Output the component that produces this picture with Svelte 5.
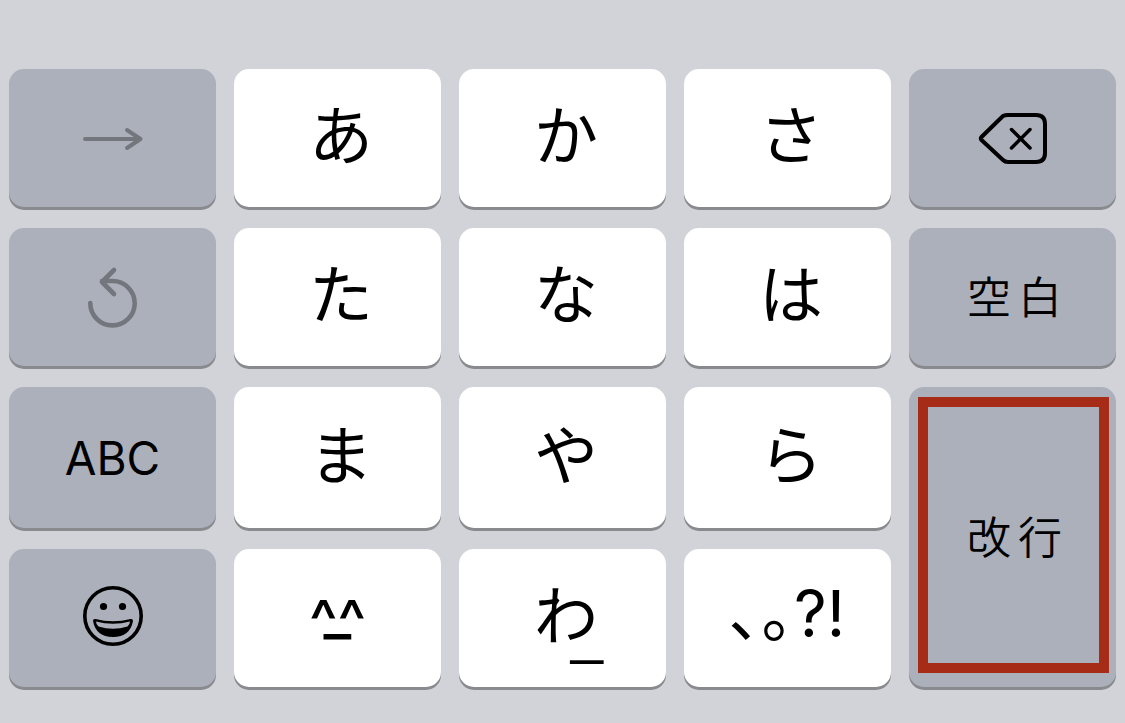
<!--
  Japanese 12-key flick keyboard
-->
<script lang="ts">
    interface Key {
        id: string;
        kind: "kana" | "caps" | "wide" | "punct" | "face" | "wa" | "icon";
        label: string;
        dark?: boolean;
        disabled?: boolean;
    }

    const keys: Key[] = [
        { id: "next", kind: "icon", label: "次候補", dark: true, disabled: true },
        { id: "a", kind: "kana", label: "あ" },
        { id: "ka", kind: "kana", label: "か" },
        { id: "sa", kind: "kana", label: "さ" },
        { id: "delete", kind: "icon", label: "削除", dark: true },

        { id: "undo", kind: "icon", label: "逆順", dark: true, disabled: true },
        { id: "ta", kind: "kana", label: "た" },
        { id: "na", kind: "kana", label: "な" },
        { id: "ha", kind: "kana", label: "は" },
        { id: "space", kind: "wide", label: "空白", dark: true },

        { id: "abc", kind: "caps", label: "ABC", dark: true },
        { id: "ma", kind: "kana", label: "ま" },
        { id: "ya", kind: "kana", label: "や" },
        { id: "ra", kind: "kana", label: "ら" },
        { id: "enter", kind: "wide", label: "改行", dark: true },

        { id: "emoji", kind: "icon", label: "絵文字", dark: true },
        { id: "face", kind: "face", label: "顔文字" },
        { id: "wa", kind: "wa", label: "わ" },
        { id: "punct", kind: "punct", label: "句読点" },
    ];
</script>

<main class="keyboard">
    {#each keys as key (key.id)}
        <button
            type="button"
            class="key key--{key.kind}"
            class:key--dark={key.dark}
            class:key--enter={key.id === "enter"}
            disabled={key.disabled}
            aria-label={key.label}
        >
            {#if key.id === "next"}
                <svg width="63" height="26" viewBox="0 0 63 26">
                    <path d="M4 14H59M46 5L59.500 14L46 23" stroke-width="4" />
                </svg>
            {:else if key.id === "undo"}
                <svg width="53" height="62" viewBox="0 0 53 62">
                    <path d="M4.300 37A22.200 22.200 0 1 0 26.500 15H16M28 4L16 16L28 28" stroke-width="4.600" />
                </svg>
            {:else if key.id === "delete"}
                <svg width="71" height="54" viewBox="0 0 71 54">
                    <path d="M26 5Q28 4 31 4H59Q68 4 68 13V42Q68 51 59 51H31Q28 51 26 49L4.500 29Q3 27.500 4.500 26Z" stroke-width="4" />
                    <path d="M34.500 18.500L53 37M53 18.500L34.500 37" stroke-width="3.500" />
                </svg>
            {:else if key.id === "emoji"}
                <svg width="63" height="66" viewBox="0 0 63 66">
                    <circle cx="32" cy="31" r="28.2" stroke-width="3.6" />
                    <circle class="fill" cx="22.5" cy="21.5" r="3.6" />
                    <circle class="fill" cx="41.5" cy="21.5" r="3.6" />
                    <path class="fill" d="M12 36Q12 33.500 14.500 34Q32 38.500 49.500 34Q52 33.500 52 36Q49 52 32 52Q15 52 12 36ZM15 36.500Q15 39.500 17.500 41.500Q32 46 46.500 41.500Q49 39.500 49 36.500Q32 41 15 36.500Z" />
                </svg>
            {:else if key.kind === "wide"}
                {#each key.label as char}
                    <span>{char}</span>
                {/each}
            {:else if key.kind === "face"}
                <span class="eyes">^^</span>
                <span class="mouth">_</span>
            {:else if key.kind === "wa"}
                <span class="wa">わ<span class="bar">_</span></span>
            {:else if key.kind === "punct"}
                <span class="kuten">､｡</span><span>?!</span>
            {:else}
                <span>{key.label}</span>
            {/if}
        </button>
    {/each}
</main>

<style>
    :global(body) {
        margin: 0;
        background: #d2d3d9;
    }

    .keyboard {
        display: grid;
        grid-template-columns: repeat(5, minmax(0, 1fr));
        grid-template-rows: 138px 138px 141px 138px;
        gap: 21px 18px;
        padding: 69px 9px 36px;
    }

    .key {
        position: relative;
        display: flex;
        align-items: center;
        justify-content: center;
        min-width: 0;
        padding: 0;
        border: 0;
        border-radius: 15px;
        background: #fff;
        box-shadow: 0 3px 0 #898a8e;
        color: #000;
        font-family: Inter, "Noto Sans CJK JP", sans-serif;
        cursor: pointer;
    }

    .key--dark {
        background: #abb0bb;
    }

    .key:disabled {
        color: #73767d;
        cursor: default;
    }

    .key--kana,
    .key--wa {
        padding: 0 0 14px 7px;
        font-family: "Noto Sans CJK JP", sans-serif;
        font-size: 64px;
        line-height: 64px;
    }

    .key--caps {
        font-size: 46px;
    }

    .key--wide {
        gap: 7px;
        padding: 0 0 5px 4px;
        font-family: "Noto Sans CJK JP", sans-serif;
        font-size: 44px;
        font-weight: 350;
        line-height: 44px;
    }

    .key--punct {
        padding-bottom: 8px;
        font-size: 64px;
        line-height: 64px;
    }

    .kuten {
        margin-bottom: 12px;
        font-family: "Noto Sans CJK JP", sans-serif;
    }

    .key--face {
        flex-direction: column;
        padding-bottom: 4px;
    }

    .eyes,
    .mouth {
        font-size: 60px;
        font-weight: 500;
        line-height: 40px;
    }

    .mouth {
        margin-top: -48px;
    }

    .wa {
        position: relative;
    }

    .bar {
        position: absolute;
        right: -5px;
        bottom: -22px;
        font-family: "Liberation Sans", sans-serif;
        font-size: 58px;
    }

    /* Frame that marks the return key */
    .key--enter {
        grid-area: 3 / 5 / span 2;
    }

    .key--enter::after {
        content: "";
        position: absolute;
        inset: 10px 7px 14px 9px;
        border: 10px solid #a62c17;
    }

    svg {
        fill: none;
        stroke: currentColor;
        stroke-linecap: round;
        stroke-linejoin: round;
    }

    .fill {
        fill: currentColor;
        fill-rule: evenodd;
        stroke: none;
    }
</style>
